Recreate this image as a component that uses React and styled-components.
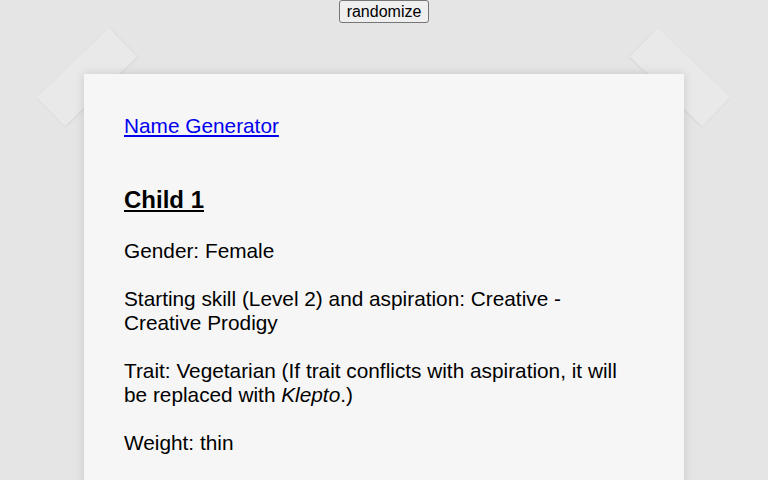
import React from 'react'
import styled, { createGlobalStyle } from 'styled-components'

const GlobalStyle = createGlobalStyle`
  html {
    background: #e5e5e5;
  }

  body {
    margin: 0;
    padding: 0;
    font-family: "Liberation Sans", Arial, sans-serif;
    color: #000;
  }
`

const Page = styled.div`
  display: flex;
  flex-direction: column;
  align-items: center;
  gap: 51px;
`

const RandomButton = styled.button`
  font-family: "Liberation Sans", Arial, sans-serif;
  font-size: 16px;
  line-height: 19px;
  padding: 1px 7px;
  margin: 0;
  color: #000;
  background: #efefef;
  border: 1px solid #767676;
  border-radius: 3px;
  cursor: pointer;
`

const Paper = styled.div`
  position: relative;
  box-sizing: border-box;
  width: 600px;
  padding: 40px 40px 16px;
  background: #f6f6f6;
  box-shadow: 0 0 10px rgba(0, 0, 0, 0.13);

  &::before,
  &::after {
    content: '';
    position: absolute;
    top: -17px;
    width: 100px;
    height: 40px;
    background: rgba(234, 234, 234, 0.85);
    box-shadow: 0 1px 3px rgba(0, 0, 0, 0.07);
    z-index: -1;
  }

  &::before {
    left: -47px;
    transform: rotate(-44deg);
  }

  &::after {
    right: -46px;
    transform: rotate(44deg);
  }
`

const Line = styled.p`
  margin: 0 0 24px;
  font-size: 20.8px;
  line-height: normal;
`

const Link = styled.a`
  color: #0000ee;
  text-decoration: underline;
`

const ChildTitle = styled.h2`
  margin: 48px 0 25px;
  font-size: 24px;
  line-height: 28px;
  font-weight: bold;
  text-decoration: underline;
`

const child = {
  gender: 'Female',
  skill: 'Creative - Creative Prodigy',
  trait: 'Vegetarian',
  fallback: 'Klepto',
  weight: 'thin',
}

export default function App() {
  return (
    <>
      <GlobalStyle />
      <Page>
        <RandomButton type="button">randomize</RandomButton>
        <Paper>
          <Line>
            <Link href="#">Name Generator</Link>
          </Line>
          <ChildTitle>Child 1</ChildTitle>
          <Line>Gender: {child.gender}</Line>
          <Line>Starting skill (Level 2) and aspiration: {child.skill}</Line>
          <Line>
            Trait: {child.trait} (If trait conflicts with aspiration, it will be replaced with{' '}
            <em>{child.fallback}</em>.)
          </Line>
          <Line>Weight: {child.weight}</Line>
        </Paper>
      </Page>
    </>
  )
}
